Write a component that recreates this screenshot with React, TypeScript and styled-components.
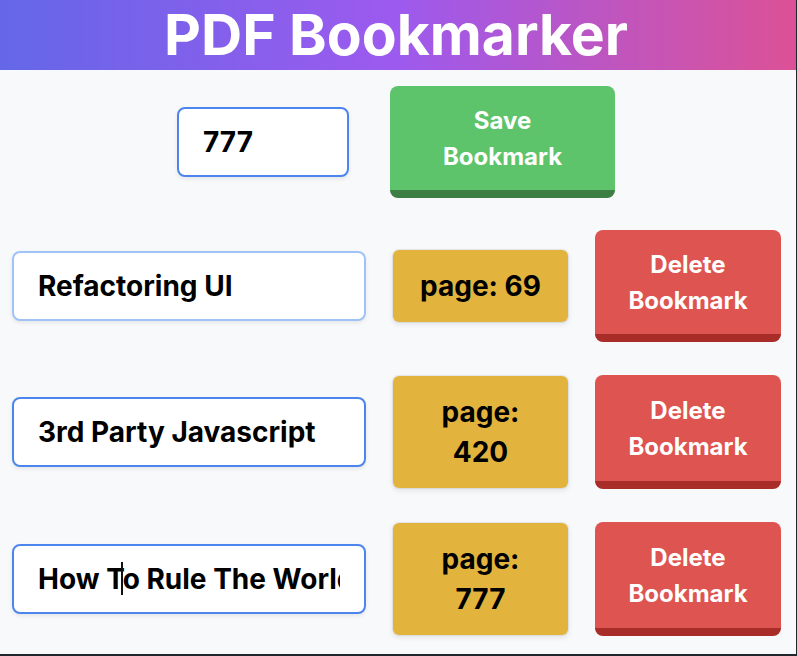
import React from "react";
import styled, { createGlobalStyle } from "styled-components";

const Global = createGlobalStyle`
  html { background: #1f272d; }
  body { margin: 0; font-family: Inter, "Noto Sans", sans-serif; }
  * { box-sizing: border-box; }
`;

const Page = styled.div`
  width: 796px;
  height: 654px;
  background: #f8f9fb;
  overflow: hidden;
`;

const Header = styled.header`
  height: 70px;
  background: linear-gradient(to right, #6467e8 0%, #9d5aee 50%, #dc5196 100%);
  display: flex;
  align-items: center;
  justify-content: center;
`;

const Title = styled.h1`
  margin: 0;
  color: #fff;
  font-size: 57px;
  font-weight: 700;
  letter-spacing: 0;
  line-height: 70px;
  padding-right: 4px;
`;

const Form = styled.form`
  display: flex;
  align-items: center;
  justify-content: center;
  gap: 41px;
  margin-top: 16px;
  padding-right: 4px;
`;

const TextInput = styled.input<{ $w: number; $soft?: boolean }>`
  width: ${(p) => p.$w}px;
  height: 70px;
  border: 2px solid ${(p) => (p.$soft ? "#9fc3f7" : "#4d85ee")};
  border-radius: 8px;
  background: #fff;
  padding: 0 24px;
  font-family: Inter, sans-serif;
  font-size: 28px;
  font-weight: 700;
  color: #000;
  outline: none;
  box-shadow: 0 2px 4px rgba(0, 0, 0, 0.08);
`;

const ActionButton = styled.button<{ $w: number; $bg: string; $edge: string }>`
  width: ${(p) => p.$w}px;
  min-height: 112px;
  display: flex;
  align-items: center;
  justify-content: center;
  text-align: center;
  background: ${(p) => p.$bg};
  border: none;
  border-bottom: 8px solid ${(p) => p.$edge};
  border-radius: 8px;
  padding: 16px 30px 14px;
  color: #fff;
  font-family: Inter, sans-serif;
  font-size: 24px;
  font-weight: 700;
  line-height: 36px;
  cursor: pointer;
`;

const List = styled.ul`
  list-style: none;
  margin: 32px 0 0;
  padding: 0 0 0 12px;
  display: flex;
  flex-direction: column;
  gap: 33px;
`;

const Row = styled.li`
  display: flex;
  align-items: stretch;
  gap: 26px;
`;

const InputWrap = styled.div`
  position: relative;
  align-self: center;
`;

const IBeam = styled.span`
  position: absolute;
  left: 109px;
  top: 18px;
  width: 2px;
  height: 33px;
  background: #111;
`;

const PageBadge = styled.div`
  align-self: center;
  width: 177px;
  background: #e2b43e;
  background-clip: padding-box;
  border: 1px solid rgba(0, 0, 0, 0.06);
  border-radius: 7px;
  padding: 16px 23px;
  text-align: center;
  font-size: 28px;
  font-weight: 700;
  line-height: 40px;
  color: #000;
  box-shadow: 0 2px 5px rgba(0, 0, 0, 0.08);
`;

const bookmarks = [
  { title: "Refactoring UI", page: 69, soft: true },
  { title: "3rd Party Javascript", page: 420 },
  { title: "How To Rule The World", page: 777, cursor: true },
];

export default function App() {
  return (
    <Page>
      <Global />
      <Header>
        <Title>PDF Bookmarker</Title>
      </Header>
      <Form onSubmit={(e) => e.preventDefault()}>
        <TextInput $w={172} defaultValue="777" />
        <ActionButton type="button" $w={225} $bg="#5ec46b" $edge="#3d7e44">
          Save Bookmark
        </ActionButton>
      </Form>
      <List>
        {bookmarks.map((b) => (
          <Row key={b.title}>
            <InputWrap>
              <TextInput $w={354} $soft={b.soft} defaultValue={b.title} />
              {b.cursor && <IBeam />}
            </InputWrap>
            <PageBadge>page: {b.page}</PageBadge>
            <ActionButton type="button" $w={186} $bg="#de5450" $edge="#a82c27">
              Delete Bookmark
            </ActionButton>
          </Row>
        ))}
      </List>
    </Page>
  );
}
